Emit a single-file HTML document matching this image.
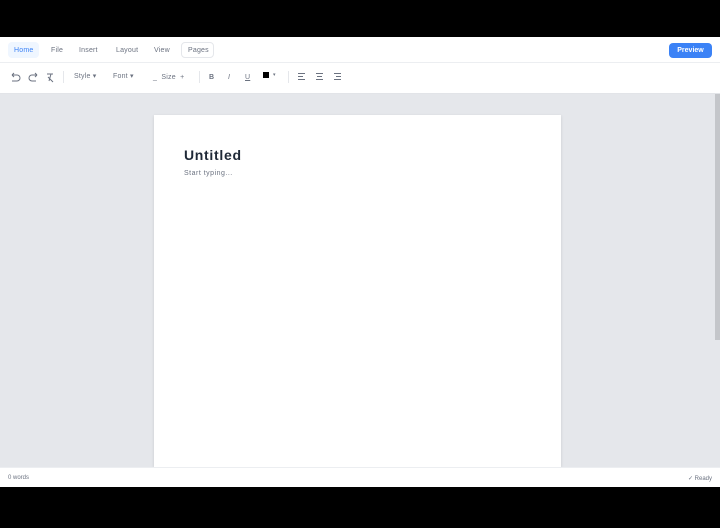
<!DOCTYPE html><html><head><style>
*{margin:0;padding:0;box-sizing:border-box}
body{width:720px;height:528px;background:#000;font-family:"Liberation Sans",sans-serif;position:relative;overflow:hidden}
.abs{position:absolute}
.menu{left:0;top:37px;width:720px;height:26px;background:#fff;border-bottom:1px solid #eceef1}
.tab{position:absolute;top:5px;height:16px;font-size:7px;color:#6b7280;line-height:18px;padding:0 6px;border-radius:4px;letter-spacing:.2px}
.tb{left:0;top:63px;width:720px;height:31px;background:#fff;border-bottom:1px solid #e2e4e8}
.t{position:absolute;font-size:7px;color:#6b7280;letter-spacing:.2px}
.sep{position:absolute;top:8px;width:1px;height:12px;background:#e5e7eb}
.canvas{left:0;top:94px;width:720px;height:373px;background:#e5e7eb}
.page{left:154px;top:115px;width:407px;height:352px;background:#fff;box-shadow:0 1px 3px rgba(0,0,0,.12)}
.status{left:0;top:467px;width:720px;height:20px;background:#fff;border-top:1px solid #eceef1;font-size:6px;color:#6b7280}
</style></head><body>
<div class="abs menu">
<div class="tab" style="left:8px;background:#eff6ff;color:#3b82f6">Home</div>
<div class="tab" style="left:45px">File</div>
<div class="tab" style="left:73px">Insert</div>
<div class="tab" style="left:110px">Layout</div>
<div class="tab" style="left:148px">View</div>
<div class="tab" style="left:181px;border:1px solid #e5e7eb;line-height:16px;width:33px">Pages</div>
<div class="abs" style="left:669px;top:6px;width:43px;height:15px;background:#3b82f6;border-radius:4px;color:#fff;font-size:7px;font-weight:bold;text-align:center;line-height:16px">Preview</div>
</div>
<div class="abs tb">
<svg class="abs" style="left:9px;top:8px" width="50" height="12" fill="none" stroke="#6b7280" stroke-width="1"><path d="M3 4h5a3 3 0 010 6H3M3 4l2-2M3 4l2 2"/><path d="M28 4h-5a3 3 0 000 6h4M28 4l-2-2M28 4l-2 2"/><path d="M38 3h6M42 3l-2 7M39 6l5 5"/></svg>
<div class="sep" style="left:63px"></div>
<div class="t" style="left:74px;top:9px">Style ▾</div>
<div class="t" style="left:113px;top:9px">Font ▾</div>
<div class="t" style="left:153px;top:11px">_ &nbsp;Size &nbsp;+</div>
<div class="sep" style="left:199px"></div>
<div class="t" style="left:209px;top:11px;font-weight:bold">B</div>
<div class="t" style="left:228px;top:11px;font-style:italic">I</div>
<div class="t" style="left:245px;top:11px;text-decoration:underline">U</div>
<div class="abs" style="left:263px;top:9px;width:6px;height:6px;background:#000"></div>
<div class="t" style="left:273px;top:9px;font-size:5px">▾</div>
<div class="sep" style="left:288px"></div>
<svg class="abs" style="left:297px;top:9px" width="48" height="10" stroke="#6b7280" stroke-width="1"><path d="M1 1.5h7M1 4.5h5M1 7.5h7M19 1.5h7M20 4.5h5M19 7.5h7M37 1.5h7M39 4.5h5M37 7.5h7"/></svg>
</div>
<div class="abs canvas"></div>
<div class="abs" style="left:715px;top:94px;width:5px;height:246px;background:#c4c6ca"></div>
<div class="abs page">
<div class="abs" style="left:30px;top:32px;font-size:14px;font-weight:bold;color:#1f2937;letter-spacing:.7px">Untitled</div>
<div class="abs" style="left:30px;top:55px;font-size:7px;color:#6b7280;letter-spacing:.5px">Start typing...</div>
</div>
<div class="abs status"><span class="abs" style="left:8px;top:7px">0 words</span><span class="abs" style="right:8px;top:7px">✓ Ready</span></div>
</body></html>
